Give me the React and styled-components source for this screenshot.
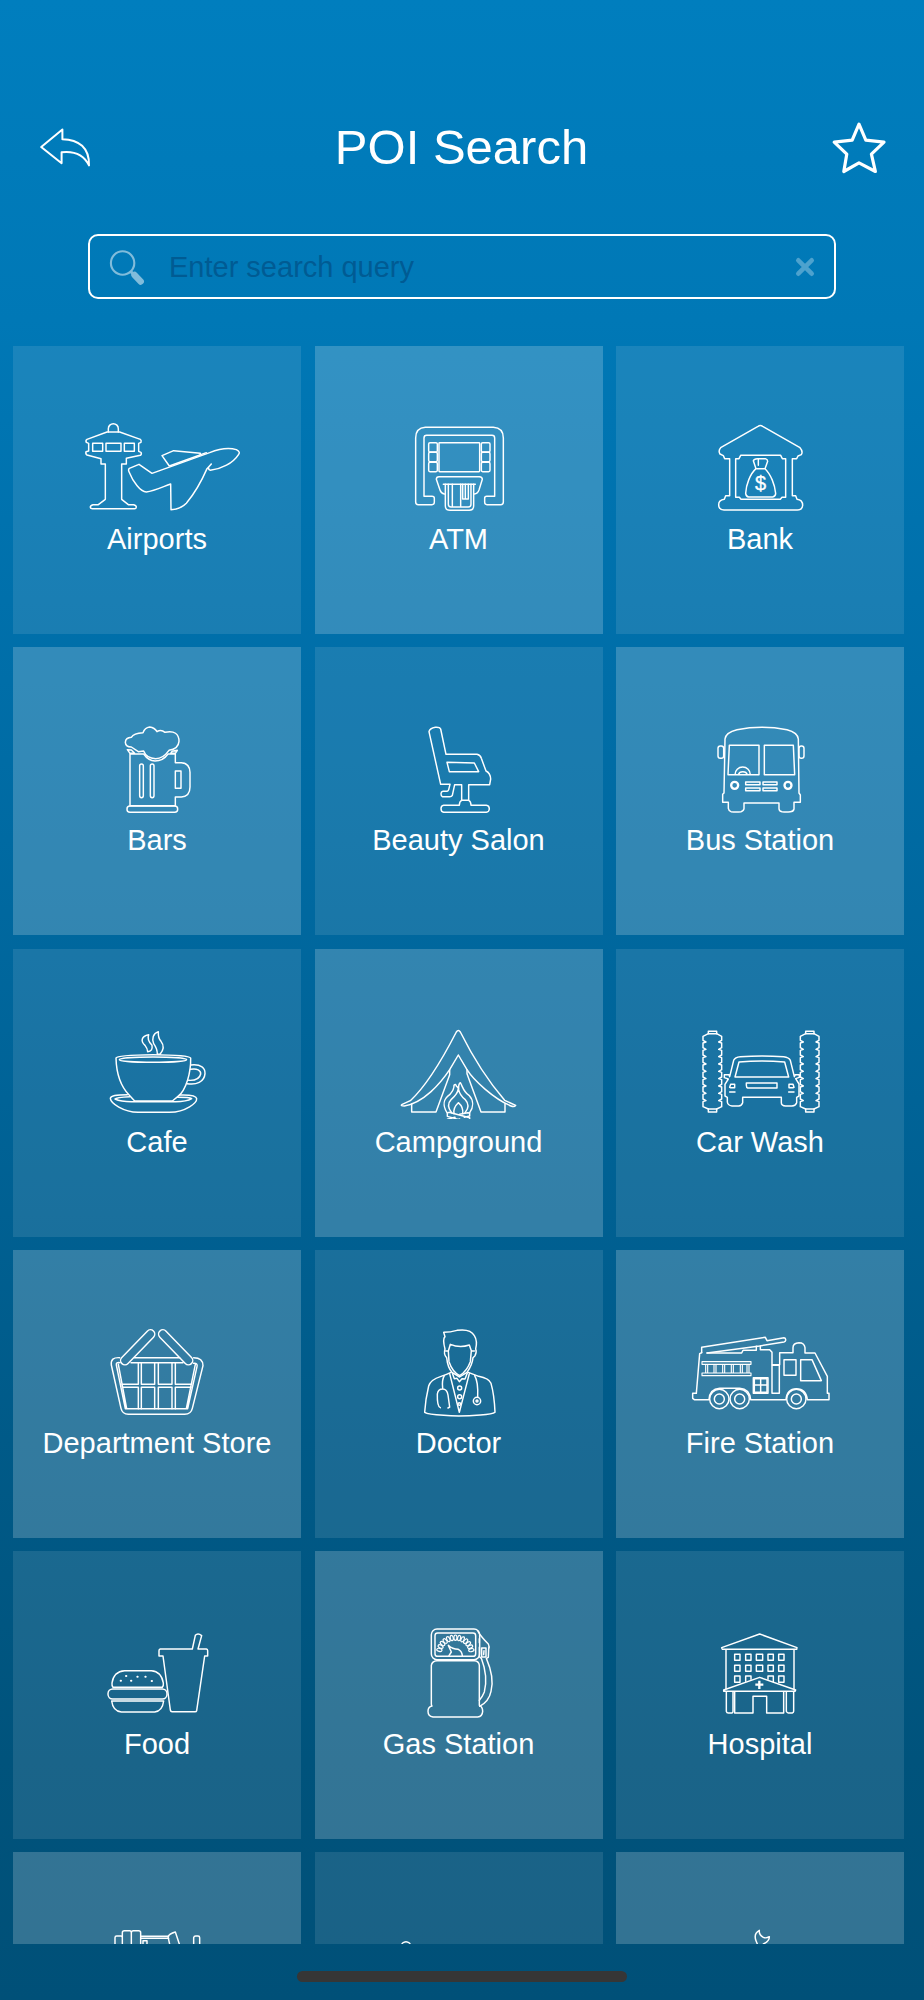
import React from "react";
import styled, { createGlobalStyle } from "styled-components";

const GlobalStyle = createGlobalStyle`
  * {
    box-sizing: border-box;
  }
  body {
    margin: 0;
    font-family: "Liberation Sans", Arial, sans-serif;
    color: #fff;
  }
`;

const Screen = styled.div`
  display: flex;
  flex-direction: column;
  height: 2000px;
  overflow: hidden;
  background: linear-gradient(
    180deg,
    #007ebe 0%,
    #0078b6 16%,
    #0072ae 26%,
    #006aa2 42%,
    #006397 55%,
    #005a88 72%,
    #00537c 88%,
    #005078 100%
  );
`;

const Header = styled.header`
  display: flex;
  align-items: center;
  justify-content: space-between;
  height: 98px;
  margin-top: 98px;
  padding: 0 37px 0 38px;
`;

const Title = styled.h1`
  margin: 0;
  font-size: 49px;
  font-weight: 400;
  line-height: 60px;
`;

const IconButton = styled.button`
  display: flex;
  padding: 0;
  border: 0;
  background: none;
  color: inherit;
`;

const SearchBox = styled.div`
  display: flex;
  align-items: center;
  width: 748px;
  height: 65px;
  margin: 38px 0 47px 88px;
  padding: 0 19px;
  border: 2.4px solid #fff;
  border-radius: 10px;
`;

const SearchInput = styled.input`
  flex: 1;
  margin-left: 24px;
  padding: 2px 0 0;
  border: 0;
  outline: 0;
  background: none;
  color: #fff;
  font: 29px "Liberation Sans", Arial, sans-serif;
  &::placeholder {
    color: #005b93;
    opacity: 1;
  }
`;

const List = styled.main`
  height: 1598px;
  overflow: hidden;
`;

const Grid = styled.div`
  display: grid;
  grid-template-columns: repeat(3, 288px);
  grid-auto-rows: 288px;
  gap: 13.3px 13.5px;
  padding-left: 13px;
`;

const Tile = styled.div`
  display: flex;
  flex-direction: column;
  align-items: center;
  padding-top: 70px;
  background: rgba(255, 255, 255, ${(props) => (props.$light ? 0.2 : 0.1)});
`;

const Label = styled.span`
  margin-top: 5px;
  font-size: 29px;
  line-height: 36px;
  white-space: nowrap;
`;

const TileIcon = styled.svg`
  flex: none;
  width: 180px;
  height: 100px;
  fill: none;
  stroke: #fff;
  stroke-width: 4.4;
  stroke-linejoin: round;
  stroke-linecap: round;
`;

const HomeBar = styled.div`
  width: 330px;
  height: 11px;
  margin: 27px auto 0;
  border-radius: 6px;
  background: #363636;
`;

// notched outline of one washing brush
const brush = (x) => {
  const notches = [80, 102, 124, 146, 168, 190, 212, 234, 256];
  const right = notches.map((y) => `L${x + 56} ${y - 5}L${x + 47} ${y}L${x + 56} ${y + 3}`).join("");
  const left = [...notches]
    .reverse()
    .map((y) => `L${x} ${y + 3}L${x + 9} ${y}L${x} ${y - 5}`)
    .join("");
  return `M${x + 16} 55L${x + 41} 55L${x + 56} 63${right}L${x + 56} 274L${x + 41} 281H${x + 16}L${x} 274${left}L${x} 63Z`;
};

const dial = Array.from({ length: 13 }, (_, i) => {
  const angle = Math.PI * (1.07 + i * 0.072);
  return [1095 + 49 * Math.cos(angle), 116 + 47 * Math.sin(angle), (angle * 180) / Math.PI];
});

const airports = (
  <>
    <path d="M116 66V56a15 15 0 0 1 30 0V66" />
    <path d="M112 66H150L212 88Q216 92 214 97L207 100V124L214 127Q217 133 212 136L170 145V162H156V268L176 284H192Q200 286 200 291Q200 296 195 296H68Q62 296 62 291Q62 286 70 284H86L107 268V162H94V146L52 135Q47 132 49 125L57 123V100L50 97Q47 91 52 88Z" />
    <path d="M69 100H99V124H69ZM109 100H154V124H109ZM164 100H194V124H164Z" />
    <path d="M179 175L208 163L247 190L420 128C450 116 480 113 500 119Q513 126 507 133C490 160 455 177 422 181Q415 179 417 171L425 162L412 176C395 215 375 250 350 280C335 295 318 299 304 299L303 222C280 230 255 243 230 246C212 246 190 215 178 185Q175 178 179 175Z" />
    <path d="M299 168L277 137L312 122L392 130L391 135L299 168L410 128" />
  </>
);

const atm = (
  <>
    <path d="M106 52H310Q340 54 340 84V276Q340 284 332 284H291Q284 284 284 277V265Q284 259 290 259H314V84Q314 76 306 76H110Q102 76 102 84V259H126Q133 259 133 265V277Q133 284 126 284H85Q77 284 77 276V84Q77 54 106 52Z" />
    <rect x="147" y="98" width="122" height="87" rx="2" />
    {[98, 127, 157].map((y) => (
      <React.Fragment key={y}>
        <rect x="116" y={y} width="26" height="28" rx="4" />
        <rect x="274" y={y} width="26" height="28" rx="4" />
      </React.Fragment>
    ))}
    <path d="M163 252Q153 250 150 240L139 208Q139 200 147 200H268Q277 201 277 208L267 240Q263 251 253 252M160 223H256" />
    <path d="M166 223V288Q166 301 180 301H238Q251 300 251 288V223M175 223V283Q175 291 183 291H235Q243 291 243 283V223M187 223V288M212 223V288M218 223V267H235V223M226 223V265" />
  </>
);

const bank = (
  <>
    <path d="M1104 49Q1111 44 1118 49L1230 113Q1240 124 1234 134L1224 138L1220 146H1207V257H1217L1221 268Q1238 270 1238 286Q1237 300 1222 300H1002Q986 299 986 284Q986 270 1003 268L1007 257H1019V146H1004L1000 137L990 132Q984 122 992 113Z" />
    <path d="M1056 136H1172L1177 146H1187V262H1176L1171 268H1053L1048 262H1037V146H1047L1052 136Z" />
    <path d="M1098 176L1090 152Q1092 146 1102 146H1126Q1133 148 1133 154L1125 176ZM1098 176C1080 192 1068 225 1067 250Q1068 260 1076 261H1148Q1157 260 1157 250C1155 225 1142 192 1125 176M1105 148V166" />
    <text x="1112" y="240" fontSize="60" textAnchor="middle" fill="#fff" stroke="#fff" strokeWidth="1">
      $
    </text>
  </>
);

const bars = (
  <>
    <path d="M95 83Q102 70 130 69Q135 54 150 52Q165 54 172 66Q184 58 196 68Q238 60 238 95Q236 118 208 122Q190 147 168 147Q140 146 132 124L116 126L95 112Q78 112 77 98Q78 84 95 83Z" />
    <path d="M91 133V288H227V262H245Q271 260 271 232V188Q270 160 245 159H227V133H205Q190 154 166 154Q146 153 132 133Z" />
    <path d="M83 120L95 121L105 131H91ZM213 131L217 125L233 122L227 131Z" />
    <rect x="227" y="184" width="17" height="52" />
    <rect x="120" y="163" width="11" height="101" rx="5.5" />
    <rect x="152" y="163" width="11" height="101" rx="5.5" />
    <rect x="82" y="289" width="152" height="19" rx="9" />
  </>
);

const salon = (
  <>
    <path d="M986 66Q988 56 1005 53Q1018 52 1021 58L1037 134H1130Q1140 136 1143 146L1157 184Q1170 190 1171 208L1168 225H1105V272Q1112 275 1112 287H1158Q1167 288 1167 298Q1166 307 1158 308H1030Q1022 306 1022 297Q1022 288 1030 287H1077Q1077 275 1084 272V225H1063L1056 257Q1054 261 1048 261H1026Q1022 259 1022 252Q1022 246 1028 245H1040Q1044 244 1045 240L1049 224H1021Z" />
    <path d="M1084 272H1105M1040 158L1122 160L1135 186H1047Z" />
  </>
);

const bus = (
  <>
    <path d="M104 88Q106 68 140 60Q215 46 290 60Q322 68 324 88L326 250L330 256V278H311V298Q309 306 300 306Q288 308 275 306Q266 304 266 297V280H161V297Q160 304 152 306Q138 308 122 306Q115 303 114 296V278H97V254L101 250Z" />
    <rect x="83" y="109" width="17" height="37" rx="7" />
    <rect x="326" y="109" width="15" height="37" rx="7" />
    <path d="M117 107H206V195H113ZM222 107H309L313 195H222ZM134 195A23 23 0 0 1 180 195M144 195A14 12 0 0 1 171 195" />
    <circle cx="133" cy="227" r="10.5" strokeWidth="7" />
    <circle cx="293" cy="227" r="10.5" strokeWidth="7" />
    <path d="M166 217H209V225H166ZM218 217H260V225H218ZM166 235H209V243H166ZM218 235H260V243H218Z" />
  </>
);

const cafe = (
  <>
    <path d="M79 128Q82 119 190 118Q298 119 303 128C304 170 290 225 264 244L248 257H135L119 240C92 212 80 170 79 128Z" />
    <ellipse cx="190" cy="133" rx="101" ry="8" />
    <path d="M304 149C335 146 347 158 346 175C344 200 320 210 292 205M302 162C322 158 334 165 333 176C330 190 315 196 297 195" />
    <path d="M113 238C80 238 62 240 62 250C64 264 100 290 145 291H240C290 290 322 262 321 250C320 241 300 238 270 239" />
    <path d="M120 244Q80 246 76 251Q95 260 133 259H250Q290 260 306 250Q300 246 264 246" />
    <path d="M177 58C155 62 152 78 166 90Q174 100 174 109Q190 108 187 90C176 78 172 70 177 58ZM206 49C190 55 186 70 192 85Q203 100 203 117H211C225 100 222 88 214 78Q205 68 206 49Z" />
  </>
);

const campground = (
  <>
    <path d="M1078 163L1104 119L1130 163C1150 195 1210 250 1262 272Q1272 276 1276 270L1243 255C1200 205 1150 130 1110 50Q1104 41 1098 50C1062 120 1010 210 960 256L934 268Q930 272 942 272C1000 262 1050 205 1078 163Z" />
    <path d="M1078 163V178L1037 290H964V266M1130 163V175L1172 290H1244V265" />
    <path d="M1070 292C1056 270 1060 250 1078 238Q1092 222 1091 210Q1096 204 1098 212Q1102 216 1105 220Q1104 206 1110 202C1118 215 1118 228 1136 240C1150 255 1150 275 1138 292" />
    <path d="M1084 292Q1066 270 1083 252Q1102 236 1104 220Q1108 240 1124 252Q1142 272 1124 292M1091 295Q1088 277 1104 262Q1120 276 1117 295" />
    <path d="M1071 293L1076 291L1138 307V317L1131 320L1071 303ZM1138 293L1132 292L1108 297M1138 293V302L1122 306M1094 306L1071 312V319L1080 320L1108 311" />
  </>
);

const carWash = (
  <>
    <path d={brush(68)} />
    <path d={brush(360)} />
    <path d="M84 55V48H109V55M84 281V290H109V281M376 55V48H401V55M376 281V290H401V281" />
    <path d="M148 184L160 135Q164 125 180 124Q245 120 310 124Q326 126 330 135L342 184L345 178H357V186L346 190L356 206V242L349 246V262Q346 271 335 272H316Q303 271 303 262V246H187V262Q184 271 175 272H155Q142 270 141 260V246L134 242V207L144 191L132 187V178H146Z" />
    <path d="M176 140Q245 134 313 140L325 185H164ZM198 203H290V218H202Q198 217 198 210ZM148 216L151 207H163V217H150ZM341 216L338 207H326V217H339ZM148 230H164M325 230H341" />
  </>
);

const departmentStore = (
  <>
    <rect x="-68" y="-13" width="136" height="26" rx="13" transform="translate(144 97) rotate(-46)" />
    <rect x="-68" y="-13" width="136" height="26" rx="13" transform="translate(258 97) rotate(46)" />
    <path d="M90 128Q62 126 65 150L94 280Q98 297 116 298H285Q304 297 308 280L340 152Q340 128 312 128" />
    <path d="M91 143Q78 141 80 150L107 281H294L322 155Q325 144 312 145M86 148L111 281M317 148L290 281M134 128H270M124 143H280" />
    <path d="M146 143V208H97M155 143V208H195V143M206 143V208H247V143M257 143V208H306M99 217H146V281M155 281V217H195V281M206 281V217H247V281M257 281V217H304" />
  </>
);

const doctor = (
  <>
    <path d="M1064 102Q1056 72 1064 65L1060 52Q1080 52 1100 46Q1140 40 1152 62Q1162 78 1156 102Q1160 110 1154 122L1148 128C1146 150 1135 165 1130 172L1108 186L1085 172Q1072 158 1069 128Q1059 118 1064 102Z" />
    <path d="M1066 108L1074 108L1080 88Q1108 100 1137 90L1143 107L1152 108M1074 108L1076 140Q1086 170 1108 182Q1130 168 1140 140L1143 107" />
    <path d="M1082 172Q1070 178 1052 184Q1020 194 1015 213Q1005 255 1003 292Q1012 298 1060 301Q1108 305 1170 300Q1208 298 1214 292Q1212 240 1202 205Q1196 190 1165 184L1134 172" />
    <path d="M1078 176L1107 292L1137 176M1086 174L1092 191L1100 190L1107 200L1115 191L1124 192L1131 174" />
    <circle cx="1108" cy="219" r="6" />
    <circle cx="1108" cy="245" r="6" />
    <circle cx="1107" cy="267" r="4" />
    <path d="M1062 182Q1054 195 1057 220M1050 278Q1040 275 1041 237Q1043 222 1057 222Q1070 222 1073 240L1078 276L1073 279M1153 182Q1164 200 1162 246" />
    <circle cx="1160" cy="258" r="11" />
    <circle cx="1160" cy="258" r="3" />
  </>
);

const fireStation = (
  <>
    <path d="M64 113V97L255 67L260 77L311 68Q317 69 316 76Q316 80 311 81L238 93L80 114" />
    <path d="M64 113L58 116L48 235H37V250L42 254H86Q88 222 118 220H178Q208 222 211 254H317Q320 221 348 221Q378 222 381 254H446V235H441V184L404 114H374V98Q372 83 356 83Q338 84 338 98V113H298V149H275V112L268 104H240V93M80 114H184L188 106H228V94" />
    <path d="M275 151H297V235H275ZM311 134H347V181H311ZM361 134H395L423 197H361ZM219 188H263V235H219Z" />
    <path d="M222 191H260V232H222ZM241 191V232M222 210H260" />
    <path d="M65 140H212V148H65ZM65 174H212V182H65ZM76 148H82V174H76ZM101 148H107V174H101ZM127 148H133V174H127ZM153 148H159V174H153ZM180 148H186V174H180ZM200 148H206V174H200Z" strokeWidth="3.4" />
    {[117, 178, 348].map((cx) => (
      <React.Fragment key={cx}>
        <circle cx={cx} cy="252" r="29" />
        <circle cx={cx} cy="252" r="15" />
      </React.Fragment>
    ))}
  </>
);

const food = (
  <>
    <path d="M70 218Q66 215 67 205Q72 170 105 168H185Q215 170 221 205Q222 215 218 218Z" />
    <rect x="55" y="223" width="177" height="30" rx="14" />
    <path d="M66 259H222Q218 290 195 292H95Q70 290 66 259Z" />
    <path d="M93 198h1M109 184h1M124 198h1M143 186h1M167 186h1M186 199h1" strokeWidth="6" />
    <path d="M212 103H308L317 62Q325 54 336 63L325 103H350Q354 104 354 108V124H345L321 288Q320 291 316 291H247Q243 291 242 286L220 124H208V108Q208 104 212 103Z" />
  </>
);

const gasStation = (
  <>
    <rect x="1023" y="43" width="145" height="92" rx="17" />
    <rect x="1034" y="55" width="122" height="70" rx="8" />
    {dial.map(([x, y, angle]) => (
      <ellipse key={angle} rx="8" ry="4.5" transform={`translate(${x} ${y}) rotate(${angle})`} strokeWidth="3.5" />
    ))}
    <path d="M1076 123L1083 112L1074 92Q1086 104 1104 104Q1115 110 1116 123" />
    <path d="M1025 274Q1023 272 1023 268V152Q1025 139 1040 138H1152Q1166 139 1167 152V272Q1177 276 1177 290Q1176 306 1162 307H1028Q1013 305 1013 290Q1013 276 1025 274Z" />
    <path d="M1163 50Q1172 66 1194 88Q1198 95 1195 104L1194 128L1188 131C1205 170 1210 200 1202 230Q1196 260 1168 275M1173 131C1188 170 1190 200 1182 232Q1177 245 1167 257M1173 131L1167 126V98M1167 72V84" />
    <path d="M1174 100H1187V127H1174ZM1181 108L1180 120" />
  </>
);

const hospital = (
  <>
    <path d="M178 58L290 99L289 104H66L64 99ZM77 104V222M281 104V222" />
    {[119, 152].map((y) =>
      [103, 136, 168, 203, 235].map((x) => <rect key={`${x}-${y}`} x={x} y={y} width={x === 168 ? 19 : 16} height="18" />)
    )}
    <path d="M103 184H119V203H103ZM235 184H251V203H235ZM136 200V184H152V194M203 194V184H219V201" />
    <path d="M70 226L178 188L286 226L284 230H70Z" />
    <path d="M177 198V223M165 210H189" strokeWidth="7" strokeLinecap="butt" />
    <path d="M103 231V295H158V245H199V295H250V231M78 231V290Q79 295 84 295H95Q98 294 98 290V231M258 231V290Q260 295 264 295H276Q280 294 280 290V231" />
  </>
);

const hotel = (
  <>
    <path d="M144 300V47Q144 42 149 42H162Q166 42 166 47V300M166 47V32Q166 26 172 26H188Q193 26 193 32V300M193 32Q193 26 199 26H215Q221 26 221 32V300M221 43H305M221 49H305" />
    <path d="M228 56H240V90H228ZM313 90L303 44Q306 36 325 30L345 90M380 90V47Q381 42 386 42H393Q398 42 398 47V90" />
  </>
);

const places = [
  { name: "Airports", viewBox: "-8 18 540 300", icon: airports },
  { name: "ATM", viewBox: "-63 18 540 300", icon: atm },
  { name: "Bank", viewBox: "840 18 540 300", icon: bank },
  { name: "Bars", viewBox: "-98 22 540 300", icon: bars },
  { name: "Beauty Salon", viewBox: "806 22 540 300", icon: salon },
  { name: "Bus Station", viewBox: "-61 22 540 300", icon: bus },
  { name: "Cafe", viewBox: "-68 11 540 300", icon: cafe },
  { name: "Campground", viewBox: "836 11 540 300", icon: campground },
  { name: "Car Wash", viewBox: "-31 11 540 300", icon: carWash },
  { name: "Department Store", viewBox: "-68 15 540 300", icon: departmentStore },
  { name: "Doctor", viewBox: "836 15 540 300", icon: doctor },
  { name: "Fire Station", viewBox: "-31 15 540 300", icon: fireStation },
  { name: "Food", viewBox: "-68 19 540 300", icon: food },
  { name: "Gas Station", viewBox: "836 19 540 300", icon: gasStation },
  { name: "Hospital", viewBox: "-91 19 540 300", icon: hospital },
  { name: "", viewBox: "0 0 540 300", icon: hotel },
  { name: "", viewBox: "0 0 540 300", icon: <circle cx="111" cy="73" r="14" /> },
  {
    name: "",
    viewBox: "0 0 540 300",
    icon: <path d="M262 66L258 56Q250 35 268 25Q266 38 280 46Q288 50 298 44Q298 58 280 66" />,
  },
];

const App = () => {
  return (
    <>
      <GlobalStyle />
      <Screen>
        <Header>
          <IconButton aria-label="Back">
            <svg width="54" height="42" viewBox="38 126 54 42" fill="none" stroke="currentColor" strokeWidth="2" strokeLinejoin="round">
              <path d="M62.4 129.6L41.2 147L61.6 163.2V152.2C74 150.8 84 155 89 165.4C89.5 148 79 139.4 62.4 139.2Z" />
            </svg>
          </IconButton>
          <Title>POI Search</Title>
          <IconButton aria-label="Favorites">
            <svg width="56" height="54" viewBox="831 119.5 56 54" fill="none" stroke="currentColor" strokeWidth="3.2" strokeLinejoin="round">
              <path d="M859 123.6L865.8 139.6L884 141.6L871.4 153.6L875.4 171L859 162.4L843.8 171L846.8 153.6L834.2 141.6L852.2 139.6Z" />
            </svg>
          </IconButton>
        </Header>
        <SearchBox>
          <svg width="36" height="36" viewBox="109 249.5 36 36" fill="none" stroke="#80bcdb">
            <circle cx="122.6" cy="263.5" r="11.7" strokeWidth="2.1" />
            <path d="M130.8 272L134 275.5" strokeWidth="3" />
            <path d="M134.5 275.5L140.7 282" strokeWidth="6.4" strokeLinecap="round" />
          </svg>
          <SearchInput placeholder="Enter search query" />
          <IconButton aria-label="Clear">
            <svg width="20" height="20" viewBox="0 0 20 20" stroke="#4da2ce" strokeWidth="4.6" strokeLinecap="round">
              <path d="M3.3 3.3L16.7 16.7M16.7 3.3L3.3 16.7" />
            </svg>
          </IconButton>
        </SearchBox>
        <List>
          <Grid>
            {places.map((place, index) => (
              <Tile key={index} $light={index % 2 === 1}>
                <TileIcon viewBox={place.viewBox}>{place.icon}</TileIcon>
                <Label>{place.name}</Label>
              </Tile>
            ))}
          </Grid>
        </List>
        <HomeBar />
      </Screen>
    </>
  );
};

export default App;
